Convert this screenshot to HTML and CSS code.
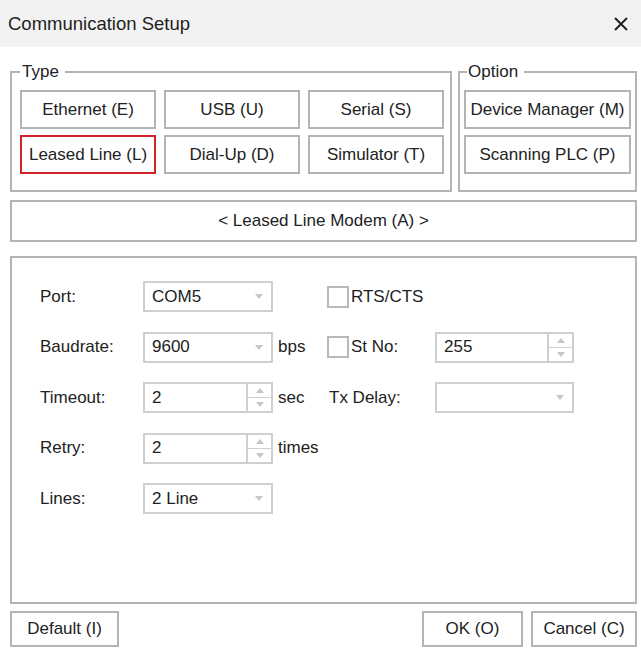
FILE: index.html
```html
<!DOCTYPE html>
<html lang="en">
<head>
<meta charset="utf-8">
<title>Communication Setup</title>
<link rel="stylesheet" href="styles.css">
</head>
<body>
<div class="titlebar">
  <span class="title">Communication Setup</span>
  <button class="close" aria-label="Close">
    <svg width="16" height="16" viewBox="0 0 16 16"><path d="M2 2 L14 14 M14 2 L2 14" stroke="#222" stroke-width="2" fill="none"/></svg>
  </button>
</div>
<div class="content">
  <div class="groups">
    <fieldset class="group group-type">
      <legend>Type</legend>
      <div class="type-grid">
        <button class="btn">Ethernet (E)</button>
        <button class="btn">USB (U)</button>
        <button class="btn">Serial (S)</button>
        <button class="btn btn-active">Leased Line (L)</button>
        <button class="btn">Dial-Up (D)</button>
        <button class="btn">Simulator (T)</button>
      </div>
    </fieldset>
    <fieldset class="group group-option">
      <legend>Option</legend>
      <div class="option-col">
        <button class="btn">Device Manager (M)</button>
        <button class="btn">Scanning PLC (P)</button>
      </div>
    </fieldset>
  </div>
  <div class="modem">&lt; Leased Line Modem (A) &gt;</div>
  <div class="panel">
    <div class="form">
      <span class="lbl">Port:</span>
      <div class="select"><span class="val">COM5</span><span class="arrow"></span></div>
      <span class="unit"></span>
      <label class="check"><span class="box"></span>RTS/CTS</label>
      <span></span>

      <span class="lbl">Baudrate:</span>
      <div class="select"><span class="val">9600</span><span class="arrow"></span></div>
      <span class="unit">bps</span>
      <label class="check"><span class="box"></span>St No:</label>
      <div class="spin"><span class="val">255</span><span class="spinbtns"><span class="up"></span><span class="down"></span></span></div>

      <span class="lbl">Timeout:</span>
      <div class="spin"><span class="val">2</span><span class="spinbtns"><span class="up"></span><span class="down"></span></span></div>
      <span class="unit">sec</span>
      <span class="lbl lbl-right">Tx Delay:</span>
      <div class="select"><span class="val"></span><span class="arrow"></span></div>

      <span class="lbl">Retry:</span>
      <div class="spin"><span class="val">2</span><span class="spinbtns"><span class="up"></span><span class="down"></span></span></div>
      <span class="unit">times</span>
      <span></span>
      <span></span>

      <span class="lbl">Lines:</span>
      <div class="select"><span class="val">2 Line</span><span class="arrow"></span></div>
      <span></span>
      <span></span>
      <span></span>
    </div>
  </div>
  <div class="footer">
    <button class="btn btn-default">Default (I)</button>
    <span class="spacer"></span>
    <button class="btn btn-ok">OK (O)</button>
    <button class="btn btn-cancel">Cancel (C)</button>
  </div>
</div>
</body>
</html>
```
FILE: styles.css
```css
* { box-sizing: border-box; }
html, body {
  margin: 0;
  padding: 0;
  background: #fff;
}
body {
  width: 641px;
  height: 650px;
  overflow: hidden;
  font-family: "Liberation Sans", Arial, Helvetica, sans-serif;
  font-size: 17px;
  color: #222;
}
button {
  font-family: inherit;
  font-size: 17px;
  color: #222;
  background: #fff;
  margin: 0;
  padding: 0;
  cursor: default;
}
.titlebar {
  height: 47px;
  background: #f2f2f2;
  display: flex;
  align-items: center;
  justify-content: space-between;
  padding: 0 12px 0 8px;
}
.title {
  font-size: 18.5px;
  color: #1e1e1e;
}
.close {
  border: none;
  background: transparent;
  width: 16px;
  height: 16px;
  display: flex;
}
.content {
  padding: 0 4px 0 10px;
}
.groups {
  display: flex;
  gap: 6px;
  margin-top: 16px;
}
.group {
  margin: 0;
  border: 2px solid #b4b4b4;
  min-width: 0;
}
.group legend {
  font-size: 17px;
  line-height: 18px;
  color: #222;
}
.group-type {
  width: 442px;
  padding: 9px 6px 16px 8px;
}
.group-type legend {
  padding: 0 6px 0 2px;
}
.group-option {
  width: 179px;
  padding: 9px 4px 16px 4px;
}
.group-option legend {
  margin-left: 3px;
  padding: 0 6px 0 1px;
}
.btn {
  border: 2px solid #b4b4b4;
  height: 39px;
  display: flex;
  align-items: center;
  justify-content: center;
  white-space: nowrap;
}
.btn-active {
  border-color: #d2232a;
}
.type-grid {
  display: grid;
  grid-template-columns: repeat(3, 136px);
  column-gap: 8px;
  row-gap: 6px;
}
.option-col {
  display: grid;
  grid-template-columns: 167px;
  row-gap: 6px;
}
.modem {
  margin-top: 8px;
  height: 42px;
  border: 2px solid #b4b4b4;
  display: flex;
  align-items: center;
  justify-content: center;
}
.panel {
  margin-top: 14px;
  height: 348px;
  border: 2px solid #b4b4b4;
  padding: 23px 0 0 28px;
}
.form {
  display: grid;
  grid-template-columns: 103px 130px 54px 108px 139px;
  grid-auto-rows: 31px;
  row-gap: 19.5px;
  align-items: center;
}
.lbl {
  white-space: nowrap;
}
.lbl-right {
  padding-left: 2px;
}
.unit {
  padding-left: 5px;
}
.select, .spin {
  height: 31px;
  border: 2px solid #cfcfcf;
  display: flex;
  align-items: center;
  position: relative;
}
.val {
  flex: 1;
  padding-left: 7px;
}
.arrow {
  width: 0;
  height: 0;
  border-left: 4px solid transparent;
  border-right: 4px solid transparent;
  border-top: 5px solid #c6c6c6;
  margin-right: 8px;
}
.spinbtns {
  width: 25px;
  height: 100%;
  border-left: 2px solid #cfcfcf;
  display: flex;
  flex-direction: column;
}
.spinbtns .up, .spinbtns .down {
  flex: 1;
  display: flex;
  align-items: center;
  justify-content: center;
}
.spinbtns .up {
  border-bottom: 1px solid #cfcfcf;
}
.spinbtns .up::after {
  content: "";
  border-left: 4px solid transparent;
  border-right: 4px solid transparent;
  border-bottom: 5px solid #c6c6c6;
}
.spinbtns .down::after {
  content: "";
  border-left: 4px solid transparent;
  border-right: 4px solid transparent;
  border-top: 5px solid #c6c6c6;
}
.check {
  display: flex;
  align-items: center;
  gap: 2px;
  white-space: nowrap;
}
.box {
  width: 22px;
  height: 22px;
  border: 2px solid #b8b8b8;
  display: inline-block;
}
.footer {
  margin-top: 7px;
  display: flex;
  gap: 8px;
}
.footer .btn {
  height: 36px;
}
.spacer {
  flex: 1;
}
.btn-default { width: 109px; }
.btn-ok { width: 101px; }
.btn-cancel { width: 106px; }
```
